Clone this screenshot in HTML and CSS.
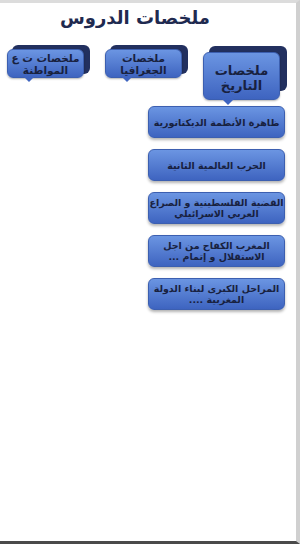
FILE: index.html
```html
<!DOCTYPE html>
<html lang="ar" dir="rtl">
<head>
    <meta charset="UTF-8">
    <meta name="viewport" content="width=device-width, initial-scale=1.0">
    <title>ملخصات الدروس</title>
    <link rel="stylesheet" href="styles.css">
</head>
<body>
    <div class="frame">
        <h1 class="title">ملخصات الدروس</h1>

        <nav class="tabs">
            <button class="tab active">ملخصات<br>التاريخ</button>
            <button class="tab">ملخصات<br>الجغرافيا</button>
            <button class="tab">ملخصات ت ع<br>المواطنة</button>
        </nav>

        <ul class="lessons">
            <li class="lesson">ظاهرة الأنظمة الديكتاتورية</li>
            <li class="lesson">الحرب العالمية الثانية</li>
            <li class="lesson">القضية الفلسطينية و الصراع<br>العربي الاسرائيلي</li>
            <li class="lesson">المغرب الكفاح من اجل<br>الاستقلال و إتمام ...</li>
            <li class="lesson">المراحل الكبرى لبناء الدولة<br>المغربية ....</li>
        </ul>
    </div>
</body>
</html>
```

FILE: styles.css
```css
html, body {
    margin: 0;
    padding: 0;
    background: #ffffff;
}
body {
    font-family: "DejaVu Sans", "Noto Sans", sans-serif;
    color: #1b2444;
}
.frame {
    box-sizing: border-box;
    height: 544px;
    border-top: 3px solid #dcdcdc;
    border-right: 4px solid #d0d0d0;
    border-bottom: 3px solid #4a4a4a;
    isolation: isolate;
}
.title {
    margin: 0;
    padding: 2px 26px 0 0;
    text-align: center;
    font-size: 18px;
    font-weight: bold;
    color: #1f2a50;
    line-height: 26px;
}
.tabs {
    display: flex;
    align-items: flex-start;
    gap: 21px;
    padding: 18px 16px 0 0;
}
.tab {
    position: relative;
    box-sizing: border-box;
    width: 77px;
    height: 29px;
    padding: 0;
    border: 1px solid #3c5fb0;
    border-radius: 6px;
    background: linear-gradient(#6b95e2, #3e64c0);
    color: #18213f;
    font-family: inherit;
    font-size: 10.5px;
    font-weight: bold;
    line-height: 12px;
    white-space: nowrap;
    box-shadow: 0 1px 2px rgba(0, 0, 0, 0.3);
}
.tab::before {
    content: "";
    position: absolute;
    z-index: -1;
    top: -5px;
    left: 4px;
    width: 78px;
    height: 29px;
    border-radius: 6px;
    background: #22305f;
}
.tab::after {
    content: "";
    position: absolute;
    bottom: -5px;
    left: 16px;
    border-left: 5px solid transparent;
    border-right: 5px solid transparent;
    border-top: 5px solid #3e64c0;
}
.tab.active {
    height: 48px;
    margin-top: 3px;
    font-size: 13px;
    line-height: 15px;
    padding-top: 4px;
}
.tab.active::before {
    top: -7px;
    left: 5px;
    height: 45px;
}
.tab.active::after {
    left: 18px;
    bottom: -6px;
    border-top-width: 6px;
    border-left-width: 6px;
    border-right-width: 6px;
}
.lessons {
    list-style: none;
    margin: 6px 0 0 0;
    padding: 0 11px 0 0;
    display: flex;
    flex-direction: column;
    align-items: flex-start;
    gap: 11px;
}
.lesson {
    box-sizing: border-box;
    width: 137px;
    height: 32px;
    display: flex;
    align-items: center;
    justify-content: center;
    text-align: center;
    border: 1px solid #3c5fb0;
    border-radius: 6px;
    background: linear-gradient(#6b95e2, #3e64c0);
    box-shadow: 0 2px 3px rgba(0, 0, 0, 0.3);
    color: #18213f;
    font-size: 9.5px;
    font-weight: bold;
    line-height: 11px;
}
```
